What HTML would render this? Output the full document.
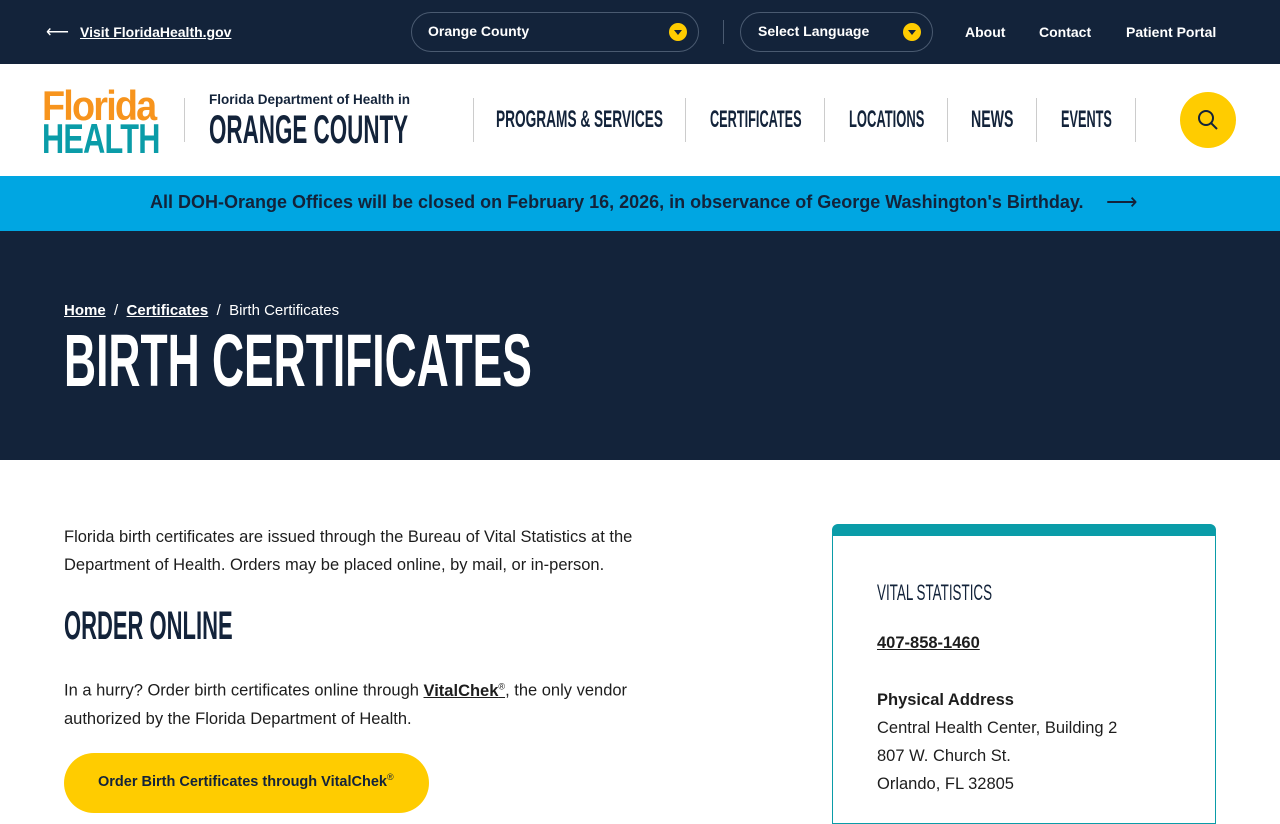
<!DOCTYPE html>
<html><head><meta charset="utf-8">
<style>
*{margin:0;padding:0;box-sizing:border-box}
body{width:1280px;height:800px;overflow:hidden;position:relative;font-family:"Liberation Sans",sans-serif;background:#fff;color:#1d1d1d}
.a{position:absolute;white-space:nowrap}
.c{display:inline-block;transform-origin:0 50%;font-weight:bold}
.top{position:absolute;left:0;top:0;width:1280px;height:64px;background:#13233a}
.pill{position:absolute;top:12px;height:40px;border:1px solid #4a5a70;border-radius:20px}
.dot{position:absolute;top:10px;width:18px;height:18px;border-radius:50%;background:#fc0}
.dot:after{content:"";position:absolute;left:5px;top:7px;border-left:4px solid transparent;border-right:4px solid transparent;border-top:5px solid #13233a}
.tw{color:#fff;font-weight:bold;font-size:14px}
.nav{position:absolute;top:98px;height:44px;border-left:1px solid #ccc}
.navt{position:absolute;top:106px;font-size:24px;color:#13233a}
</style></head><body>
<div class="top"></div>
<div class="a tw" style="left:46px;top:22px;font-size:16px;font-weight:normal">⟵</div>
<div class="a tw" style="left:80px;top:24px;text-decoration:underline">Visit FloridaHealth.gov</div>
<div class="pill" style="left:411px;width:288px"><div class="dot" style="left:257px"></div></div>
<div class="a tw" style="left:428px;top:23px">Orange County</div>
<div class="a" style="left:723px;top:20px;width:1px;height:24px;background:#4a5a70"></div>
<div class="pill" style="left:740px;width:193px"><div class="dot" style="left:162px"></div></div>
<div class="a tw" style="left:758px;top:23px">Select Language</div>
<div class="a tw" style="left:965px;top:24px">About</div>
<div class="a tw" style="left:1039px;top:24px">Contact</div>
<div class="a tw" style="left:1126px;top:24px">Patient Portal</div>

<div class="a" style="left:42px;top:82px;font-size:42px;font-weight:bold;color:#f7941d;letter-spacing:-2px"><span class="c" style="transform:scaleX(.9)">Florida</span></div>
<div class="a" style="left:42px;top:115px;font-size:42px;font-weight:bold;color:#0a9ca8;letter-spacing:-1px"><span class="c" style="transform:scaleX(.73)">HEALTH</span></div>
<div class="a" style="left:184px;top:98px;width:1px;height:44px;background:#ccc"></div>
<div class="a" style="left:209px;top:92px;font-size:13.5px;font-weight:bold;color:#13233a">Florida Department of Health in</div>
<div class="a" style="left:209px;top:108px;font-size:40px;color:#13233a"><span class="c" style="transform:scaleX(.56)">ORANGE COUNTY</span></div>
<div class="nav" style="left:473px"></div><div class="navt" style="left:496px"><span class="c" style="transform:scaleX(.57)">PROGRAMS &amp; SERVICES</span></div>
<div class="nav" style="left:685px"></div><div class="navt" style="left:710px"><span class="c" style="transform:scaleX(.53)">CERTIFICATES</span></div>
<div class="nav" style="left:824px"></div><div class="navt" style="left:849px"><span class="c" style="transform:scaleX(.54)">LOCATIONS</span></div>
<div class="nav" style="left:947px"></div><div class="navt" style="left:971px"><span class="c" style="transform:scaleX(.59)">NEWS</span></div>
<div class="nav" style="left:1036px"></div><div class="navt" style="left:1061px"><span class="c" style="transform:scaleX(.53)">EVENTS</span></div>
<div class="nav" style="left:1135px"></div>
<div class="a" style="left:1180px;top:92px;width:56px;height:56px;border-radius:50%;background:#fc0"></div>
<svg class="a" style="left:1196px;top:108px" width="24" height="24" viewBox="0 0 24 24" fill="none" stroke="#13233a" stroke-width="2"><circle cx="10" cy="10" r="7"/><path d="M15 15l6 6"/></svg>

<div class="a" style="left:0;top:176px;width:1280px;height:55px;background:#00a6e2"></div>
<div class="a" style="left:150px;top:192px;font-size:18px;font-weight:bold;color:#13233a">All DOH-Orange Offices will be closed on February 16, 2026, in observance of George Washington's Birthday.</div>
<div class="a" style="left:1106px;top:189px;font-size:22px;color:#13233a">⟶</div>

<div class="a" style="left:0;top:231px;width:1280px;height:229px;background:#13233a"></div>
<div class="a" style="left:64px;top:302px;font-size:15px;color:#fff"><b style="text-decoration:underline">Home</b> &nbsp;/&nbsp; <b style="text-decoration:underline">Certificates</b> &nbsp;/&nbsp; Birth Certificates</div>
<div class="a" style="left:64px;top:318px;font-size:74px;color:#fff"><span class="c" style="transform:scaleX(.6)">BIRTH CERTIFICATES</span></div>

<div class="a" style="left:64px;top:523px;font-size:16.5px;line-height:28px">Florida birth certificates are issued through the Bureau of Vital Statistics at the<br>Department of Health. Orders may be placed online, by mail, or in-person.</div>
<div class="a" style="left:64px;top:604px;font-size:40px;color:#13233a"><span class="c" style="transform:scaleX(.55)">ORDER ONLINE</span></div>
<div class="a" style="left:64px;top:672px;font-size:16.5px;line-height:28px">In a hurry? Order birth certificates online through <b style="text-decoration:underline">VitalChek<sup style="font-size:9px;font-weight:normal">®</sup></b>, the only vendor<br>authorized by the Florida Department of Health.</div>
<div class="a" style="left:64px;top:753px;width:365px;height:60px;border-radius:30px;background:#fc0"></div>
<div class="a" style="left:98px;top:772px;font-size:14.5px;font-weight:bold;color:#13233a">Order Birth Certificates through VitalChek<sup style="font-size:9px;font-weight:normal">®</sup></div>

<div class="a" style="left:832px;top:524px;width:384px;height:300px;border:1.5px solid #0a9ca8;border-top:12px solid #0a9ca8;border-radius:6px 6px 0 0"></div>
<div class="a" style="left:877px;top:580px;font-size:22px;color:#13233a"><span class="c" style="transform:scaleX(.61);font-weight:normal">VITAL STATISTICS</span></div>
<div class="a" style="left:877px;top:634px;font-size:16.5px;font-weight:bold;text-decoration:underline">407-858-1460</div>
<div class="a" style="left:877px;top:686px;font-size:16.5px;line-height:28px"><b>Physical Address</b><br>Central Health Center, Building 2<br>807 W. Church St.<br>Orlando, FL 32805</div>
</body></html>
